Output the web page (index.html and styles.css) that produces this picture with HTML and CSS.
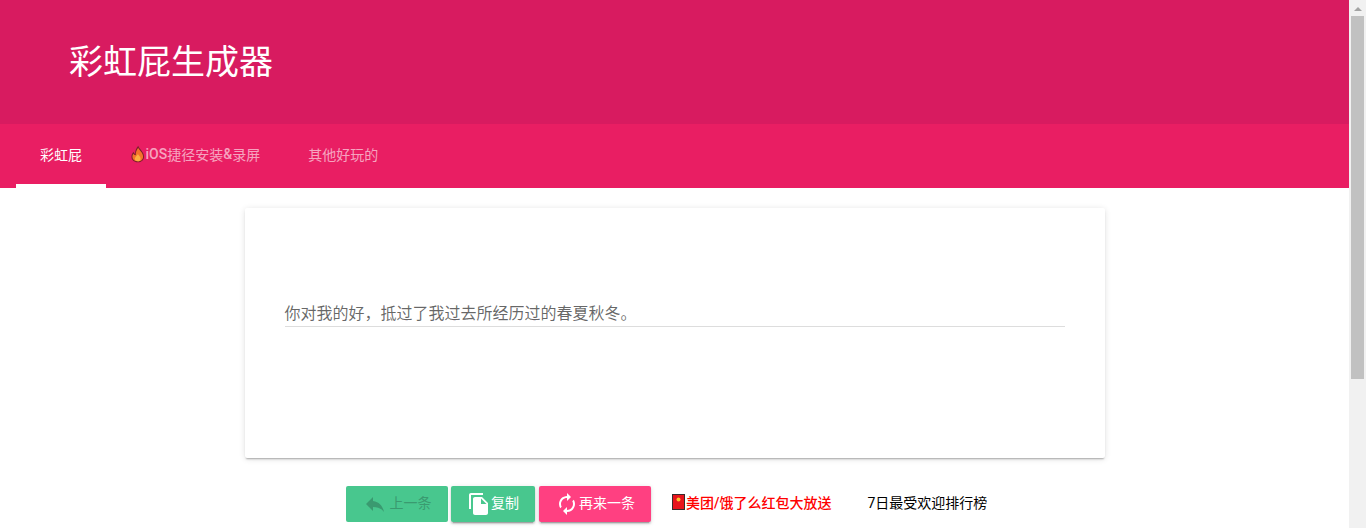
FILE: index.html
```html
<!DOCTYPE html>
<html lang="zh-CN">
<head>
  <meta charset="UTF-8">
  <title>彩虹屁生成器</title>
  <link rel="stylesheet" href="styles.css">
</head>
<body>

<div class="page">
  <header class="site-header">
    <h1 class="site-title">彩虹屁生成器</h1>
  </header>

  <nav class="tabs">
    <a class="tab tab-active">彩虹屁</a>
    <a class="tab">
      <svg class="emoji" viewBox="0 0 16 18">
        <path d="M8.500 .5C9 3.500 14.300 6.500 14.500 11.500C14.600 15 12 17.500 8 17.500C4 17.500 1.500 15 1.500 11.800C1.500 9.500 2.700 8 3.700 6.800C4 8 4.500 8.700 5.300 9C5.100 6 6.300 3 8.500 .5Z" fill="#7a1f2b"/>
        <path d="M8.500 2.600C9.200 5 13.400 7.500 13.500 11.500C13.600 14.500 11.500 16.600 8 16.600C4.500 16.600 2.500 14.600 2.500 11.900C2.500 10.600 2.900 9.600 3.500 8.800C3.900 9.600 4.700 10.200 6 10.300C5.800 7.500 6.800 5 8.500 2.600Z" fill="#f4722b"/>
        <path d="M8.200 9C8.600 10.500 11 11.600 11 13.800C11 15.500 9.700 16.500 8 16.500C6.300 16.500 5 15.500 5 13.900C5 11.800 7.400 11 8.200 9Z" fill="#fbb040"/>
      </svg><b class="tab-latin">iOS</b>捷径安装<b class="tab-latin">&amp;</b>录屏
    </a>
    <a class="tab">其他好玩的</a>
  </nav>

  <main class="content">
    <section class="card">
      <p class="quote">你对我的好，抵过了我过去所经历过的春夏秋冬。</p>
    </section>

    <div class="actions">
      <button class="btn btn-green btn-disabled">
        <svg class="btn-icon btn-icon-reply" viewBox="0 0 24 24"><path d="M10 9V5l-7 7 7 7v-4.100c5 0 8.500 1.600 11 5.100-1-5-4-10-11-11z"/></svg>
        <span class="btn-label">上一条</span>
      </button>
      <button class="btn btn-green btn-copy">
        <svg class="btn-icon" viewBox="0 0 24 24"><path d="M16 1H4c-1.100 0-2 .9-2 2v14h2V3h12V1zm-1 4l6 6v10c0 1.100-.9 2-2 2H7.990C6.890 23 6 22.100 6 21l.01-14c0-1.100.89-2 1.990-2h7zm-1 7h5.500L14 6.500V12z"/></svg>
        <span class="btn-label">复制</span>
      </button>
      <button class="btn btn-pink">
        <svg class="btn-icon" viewBox="0 0 24 24"><path d="M12 6v3l4-4-4-4v3c-4.420 0-8 3.580-8 8 0 1.570.46 3.030 1.240 4.260L6.700 14.800c-.45-.83-.7-1.790-.7-2.800 0-3.310 2.690-6 6-6zm6.760 1.740L17.300 9.200c.44.840.7 1.790.7 2.800 0 3.310-2.690 6-6 6v-3l-4 4 4 4v-3c4.420 0 8-3.580 8-8 0-1.570-.46-3.030-1.240-4.260z"/></svg>
        <span class="btn-label">再来一条</span>
      </button>
      <a class="link link-red">
        <svg class="emoji-packet" viewBox="0 0 15 16">
          <rect x="1.500" y=".5" width="12" height="15" fill="#e8141c" stroke="#3a2a2a"/>
          <circle cx="7.500" cy="5.500" r="2" fill="#fbc02d"/>
        </svg>美团/饿了么红包大放送
      </a>
      <a class="link">7日最受欢迎排行榜</a>
    </div>
  </main>
</div>

<div class="scrollbar">
  <div class="scrollbar-arrow"></div>
  <div class="scrollbar-thumb"></div>
</div>

</body>
</html>
```

FILE: styles.css
```css
html, body {
  height: 528px;
  overflow: hidden;
}

body {
  margin: 0;
  display: flex;
  font-family: Roboto, "Noto Sans CJK SC", sans-serif;
  background: #fff;
}

.page {
  flex: 1;
  min-width: 0;
}

.site-header {
  height: 124px;
  padding-left: 69px;
  display: flex;
  align-items: center;
  background-color: #d81b60;
}

.site-title {
  margin: 0;
  color: #fff;
  font-size: 34px;
  font-weight: 400;
  line-height: 1;
}

.tabs {
  height: 64px;
  padding-left: 16px;
  display: flex;
  background-color: #e91e63;
}

.tab {
  padding: 0 24px;
  display: flex;
  align-items: center;
  box-sizing: border-box;
  border-bottom: 4px solid transparent;
  color: rgba(255, 255, 255, 0.6);
  font-size: 14px;
  font-weight: 400;
  white-space: nowrap;
}

.tab-active {
  color: #fff;
  border-bottom-color: #fff;
}

.tab-latin {
  font-weight: 500;
}

.emoji {
  width: 15.5px;
  height: 18px;
  flex: none;
}

.content {
  padding-top: 20px;
}

.card {
  width: 860px;
  height: 250px;
  margin: 0 auto;
  padding: 0 40px 44px;
  box-sizing: border-box;
  display: flex;
  align-items: center;
  background: #fff;
  border-radius: 2px;
  box-shadow: 0 2px 2px -1px rgba(0, 0, 0, 0.3), 0 1px 6px 0 rgba(0, 0, 0, 0.12);
}

.quote {
  flex: 1;
  margin: 0;
  padding-top: 6px;
  line-height: 24px;
  border-bottom: 1px solid #ddd;
  color: rgba(0, 0, 0, 0.6);
  font-size: 16px;
}

.actions {
  margin-top: 28px;
  margin-left: 346px;
  display: flex;
  align-items: center;
}

.btn {
  height: 36px;
  padding: 0;
  display: flex;
  align-items: center;
  justify-content: center;
  border: none;
  border-radius: 2px;
  color: #fff;
  font-family: inherit;
  font-size: 14px;
  font-weight: 400;
  white-space: nowrap;
  box-shadow: 0 3px 1px -2px rgba(0, 0, 0, 0.2), 0 2px 2px 0 rgba(0, 0, 0, 0.14), 0 1px 5px 0 rgba(0, 0, 0, 0.12);
}

.btn-green {
  background-color: #48c78e;
}

.btn-pink {
  width: 112px;
  margin-left: 4px;
  background-color: #ff4081;
}

.btn-disabled {
  width: 102px;
  color: #3a9a70;
  box-shadow: none;
}

.btn-copy {
  width: 84px;
  margin-left: 3px;
}

.btn-label {
  padding-bottom: 5px;
}

.btn-icon {
  width: 24px;
  height: 24px;
  fill: currentColor;
}

.btn-icon-reply {
  margin-right: 3px;
}

.link {
  margin-left: 36px;
  padding-bottom: 5px;
  display: flex;
  align-items: center;
  color: #000;
  font-size: 14px;
  white-space: nowrap;
}

.link-red {
  margin-left: 20px;
  color: #f00;
  font-weight: 500;
}

.emoji-packet {
  width: 15px;
  height: 16px;
}

.scrollbar {
  width: 17px;
  flex: none;
  background-color: #f1f1f1;
}

.scrollbar-arrow {
  width: 0;
  height: 0;
  margin: 7px auto 5px;
  border-left: 4px solid transparent;
  border-right: 4px solid transparent;
  border-bottom: 4px solid #a3a3a3;
}

.scrollbar-thumb {
  width: 13px;
  height: 363px;
  margin: 0 auto;
  background-color: #c1c1c1;
}
```
